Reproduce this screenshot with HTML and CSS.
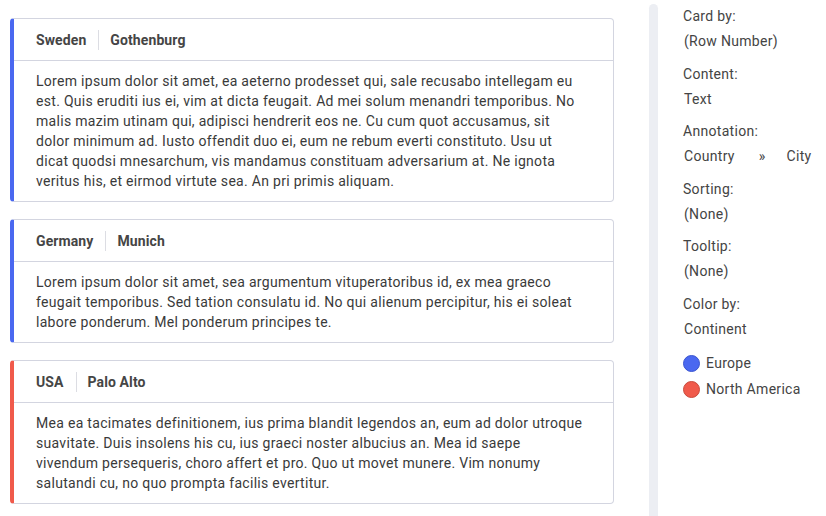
FILE: index.html
```html
<!DOCTYPE html>
<html>
<head>
<meta charset="utf-8">
<link rel="stylesheet" href="styles.css">
</head>
<body>
<div class="page">
  <div class="cards">
    <div class="card europe">
      <div class="card-head"><span class="country">Sweden</span><span class="sep"></span><span class="city">Gothenburg</span></div>
      <div class="card-body">Lorem ipsum dolor sit amet, ea aeterno prodesset qui, sale recusabo intellegam eu est. Quis eruditi ius ei, vim at dicta feugait. Ad mei solum menandri temporibus. No malis mazim utinam qui, adipisci hendrerit eos ne. Cu cum quot accusamus, sit dolor minimum ad. Iusto offendit duo ei, eum ne rebum everti constituto. Usu ut dicat quodsi mnesarchum, vis mandamus constituam adversarium at. Ne ignota veritus his, et eirmod virtute sea. An pri primis aliquam.</div>
    </div>
    <div class="card europe">
      <div class="card-head"><span class="country">Germany</span><span class="sep"></span><span class="city">Munich</span></div>
      <div class="card-body">Lorem ipsum dolor sit amet, sea argumentum vituperatoribus id, ex mea graeco feugait temporibus. Sed tation consulatu id. No qui alienum percipitur, his ei soleat labore ponderum. Mel ponderum principes te.</div>
    </div>
    <div class="card namerica">
      <div class="card-head"><span class="country">USA</span><span class="sep"></span><span class="city">Palo Alto</span></div>
      <div class="card-body">Mea ea tacimates definitionem, ius prima blandit legendos an, eum ad dolor utroque suavitate. Duis insolens his cu, ius graeci noster albucius an. Mea id saepe vivendum persequeris, choro affert et pro. Quo ut movet munere. Vim nonumy salutandi cu, no quo prompta facilis evertitur.</div>
    </div>
  </div>
  <div class="strip"></div>
  <div class="panel">
    <div class="group"><div class="label">Card by:</div><div class="value">(Row Number)</div></div>
    <div class="group"><div class="label">Content:</div><div class="value">Text</div></div>
    <div class="group"><div class="label">Annotation:</div><div class="value annot"><span>Country</span><span class="chev">»</span><span>City</span></div></div>
    <div class="group"><div class="label">Sorting:</div><div class="value">(None)</div></div>
    <div class="group"><div class="label">Tooltip:</div><div class="value">(None)</div></div>
    <div class="group"><div class="label">Color by:</div><div class="value">Continent</div></div>
    <div class="legend">
      <div class="legend-item"><span class="dot blue"></span>Europe</div>
      <div class="legend-item"><span class="dot red"></span>North America</div>
    </div>
  </div>
</div>
</body>
</html>
```

FILE: styles.css
```css
html, body {
  margin: 0;
  padding: 0;
  background: #ffffff;
  font-family: Roboto, "Liberation Sans", sans-serif;
  font-size: 14px;
  color: #3c3c3c;
}
.page {
  display: flex;
  align-items: flex-start;
  height: 516px;
  overflow: hidden;
}
.cards {
  width: 604px;
  padding: 18px 0 0 10px;
  display: flex;
  flex-direction: column;
  gap: 17px;
  flex: none;
}
.card {
  border: 1px solid #d3d5e0;
  border-left: 4px solid #4a68f0;
  border-radius: 4px;
  background: #fff;
}
.card.namerica {
  border-left-color: #f05a4b;
}
.card-head {
  height: 41px;
  display: flex;
  align-items: center;
  padding-left: 22px;
  border-bottom: 1px solid #d3d5e0;
  font-weight: 700;
  color: #454545;
  letter-spacing: 0.1px;
}
.sep {
  width: 1px;
  height: 20px;
  background: #dcdde3;
  margin: 0 11px 0 12px;
}
.card-body {
  padding: 10px 27px 10px 22px;
  line-height: 20px;
  color: #3a3a3a;
  letter-spacing: 0.3px;
}
.strip {
  flex: none;
  width: 9px;
  height: 520px;
  margin: 4px 0 0 35px;
  background: #eceef3;
  border-radius: 5px 5px 0 0;
}
.panel {
  flex: none;
  padding: 6px 0 0 25px;
  line-height: 20px;
  color: #444;
  letter-spacing: 0.3px;
}
.group {
  margin-bottom: 12.5px;
}
.label {
  margin-bottom: 5px;
}
.value {
  padding-left: 1px;
}
.annot {
  display: flex;
}
.chev {
  margin: 0 21px 0 24px;
  font-size: 14px;
}
.legend {
  padding-top: 2px;
  display: flex;
  flex-direction: column;
  gap: 6px;
}
.legend-item {
  display: flex;
  align-items: center;
  gap: 6px;
}
.dot {
  width: 15px;
  height: 15px;
  border-radius: 50%;
  display: inline-block;
}
.dot.blue { background: #4a68f0; border: 0.5px solid #3a55d0; }
.dot.red { background: #f05a4b; border: 0.5px solid #c94a3c; }
```
